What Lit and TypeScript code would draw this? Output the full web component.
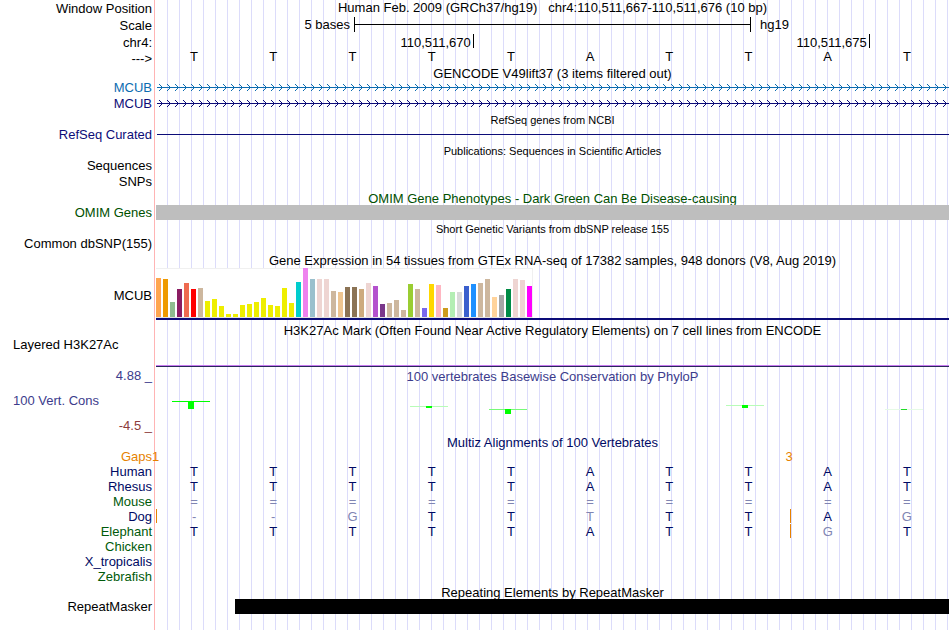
import { LitElement, html, css, nothing } from "lit";
import { customElement, property } from "lit/decorators.js";
import { styleMap } from "lit/directives/style-map.js";

type Tone = "black" | "navy" | "blue" | "omim" | "species" | "cons" | "neg" | "align" | "gap";

/* Median expression bars: [height, colour], one per tissue. */
const Y = "#eeee00";
const TAN = "#cdb79e";
const ROSE = "#eed5d2";
const EXPRESSION: [number, string][] = [
  [39, "#ffa54f"], [38, "#ee9a00"], [15, "#8fbc8f"], [28, "#8b1c62"], [34, "#ee6a50"], [28, "#ff0000"],
  [29, TAN], [16, Y], [18, Y], [11, Y], [3, Y], [3, Y], [12, Y], [13, Y], [15, Y], [19, Y], [12, Y],
  [11, Y], [29, Y], [14, Y], [35, "#00cdcd"], [49, "#ee82ee"], [38, "#9ac0cd"], [38, ROSE], [38, ROSE],
  [26, TAN], [25, "#eec591"], [30, "#8b7355"], [30, "#8b7355"], [28, "#cdaa7d"], [34, ROSE],
  [31, "#b452cd"], [13, "#7a378b"], [14, TAN], [17, TAN], [7, TAN], [33, "#9acd32"], [28, TAN],
  [9, "#7a67ee"], [33, "#ffd700"], [32, "#ffb6c1"], [9, "#cd9b1d"], [25, "#b4eeb4"], [25, "#d9d9d9"],
  [31, "#3a5fcd"], [33, "#1e90ff"], [34, TAN], [38, TAN], [20, "#ffd39b"], [22, "#a6a6a6"],
  [28, "#008b45"], [38, ROSE], [37, ROSE], [31, "#ff00ff"],
];

/* Conservation marks: column, offset from top, block depth, whisker and block colours. */
const MARKS = [
  { col: 1, top: 18, depth: 8, line: "#00ff00", fill: "#00ff00" },
  { col: 4, top: 23, depth: 2, line: "#b8fcb8", fill: "#00ff00" },
  { col: 5, top: 26, depth: 5, line: "#78fa78", fill: "#00ff00" },
  { col: 8, top: 22, depth: 3, line: "#b8fcb8", fill: "#00ff00" },
  { col: 10, top: 26, depth: 1, line: "#e6fae6", fill: "#20dc28" },
];

const REFERENCE = "TTTTTATTAT";

/* Lower case marks a base that differs from the human one. */
const SPECIES: { name: string; tone: Tone; bases: string; inserts: number[] }[] = [
  { name: "Human", tone: "align", bases: REFERENCE, inserts: [] },
  { name: "Rhesus", tone: "align", bases: REFERENCE, inserts: [] },
  { name: "Mouse", tone: "species", bases: "==========", inserts: [] },
  { name: "Dog", tone: "align", bases: "--gTTtTTAg", inserts: [0, 8] },
  { name: "Elephant", tone: "species", bases: "TTTTTATTgT", inserts: [8] },
  { name: "Chicken", tone: "species", bases: "", inserts: [] },
  { name: "X_tropicalis", tone: "align", bases: "", inserts: [] },
  { name: "Zebrafish", tone: "species", bases: "", inserts: [] },
];

const tones = css`
  .black { color: #000000; }
  .navy { color: #0c0c78; }
  .blue { color: #0c6cb0; }
  .omim { color: #005000; }
  .species { color: #005a0a; }
  .cons { color: #3c3c8c; }
  .neg { color: #8c3c3c; }
  .align { color: #000a64; }
  .gap { color: #e68200; }
`;

@customElement("base-row")
class BaseRow extends LitElement {
  @property() bases = "";
  @property() tone: Tone = "black";
  @property({ attribute: false }) inserts: number[] = [];

  static styles = [
    tones,
    css`
      :host { display: block; }
      .row {
        display: grid;
        grid-template-columns: repeat(10, minmax(0, 1fr));
        padding-right: 1px;
      }
      .base { text-align: center; padding-right: 3px; }
      .faint { color: #8085b2; }
      .insert {
        background: linear-gradient(#e68200, #e68200) 0 0 / 1px 14px no-repeat;
      }
    `,
  ];

  render() {
    return html`<div class="row ${this.tone}">
      ${[...this.bases].map((b, i) => {
        const faint = b === "=" || b === "-" || b !== b.toUpperCase();
        const insert = this.inserts.includes(i);
        return html`<span class="base ${faint ? "faint" : ""} ${insert ? "insert" : ""}">${b.toUpperCase()}</span>`;
      })}
    </div>`;
  }
}

@customElement("gene-arrow")
class GeneArrow extends LitElement {
  @property() tone: Tone = "navy";

  static styles = [
    tones,
    css`
      :host { display: block; height: 16px; }
      svg { display: block; width: 100%; height: 16px; }
    `,
  ];

  render() {
    return html`<svg class=${this.tone} shape-rendering="crispEdges" aria-hidden="true">
      <defs>
        <pattern id="chevron" width="8" height="16" patternUnits="userSpaceOnUse">
          <path
            d="M3 4h1v1h-1zM4 5h1v1h-1zM5 6h1v1h-1zM6 7h1v1h-1zM5 8h1v1h-1zM4 9h1v1h-1zM3 10h1v1h-1z"
            fill="currentColor"
          />
        </pattern>
      </defs>
      <rect x="1" y="7" width="100%" height="1" fill="currentColor" />
      <rect width="100%" height="16" fill="url(#chevron)" />
    </svg>`;
  }
}

@customElement("app-root")
class AppRoot extends LitElement {
  static styles = [
    tones,
    css`
      :host {
        display: block;
        font: 13px/15px "Liberation Sans", Arial, sans-serif;
        color: #000000;
        background: #ffffff;
      }
      .browser {
        box-sizing: border-box;
        min-height: 100vh;
        margin-right: 1px;
        background:
          linear-gradient(#ffb4b4, #ffb4b4) 154px 0 / 1px 100% no-repeat,
          linear-gradient(#ffffff, #ffffff) 0 0 / 156px 100% no-repeat,
          repeating-linear-gradient(to right, transparent 0 11px, #dcdcfa 11px 12px) 0 0 / 12px 100% repeat-x;
      }
      .track {
        display: grid;
        grid-template-columns: 152px minmax(0, 1fr);
        column-gap: 4px;
        height: 16px;
      }
      .label { text-align: right; white-space: nowrap; }
      .left { text-align: left; padding-left: 13px; }
      .ruler { height: 17px; line-height: 17px; }
      .sequence { height: 14px; }
      .sequence base-row { line-height: 11px; }
      .title {
        height: 15px;
        margin: 0 0 0 156px;
        font-size: 13px;
        font-weight: normal;
        line-height: 17px;
        text-align: center;
        white-space: nowrap;
      }
      .small { font-size: 11px; line-height: 16px; }
      .position { text-align: center; white-space: pre; line-height: 16px; }

      .scale { display: grid; grid-template-columns: 1fr 2fr 1fr; padding-right: 1px; line-height: 16px; }
      .unit { text-align: right; padding-right: 4px; }
      .bar {
        height: 15px;
        margin-right: -1px;
        border: solid #000000;
        border-width: 0 1px;
        background: linear-gradient(#000000, #000000) 0 7px / 100% 1px no-repeat;
      }
      .assembly { padding-left: 10px; }

      .ticks { display: grid; grid-template-columns: 4fr 5fr 1fr; padding-right: 1px; }
      .tick {
        height: 14px;
        margin-right: -1px;
        padding-right: 2px;
        border-right: 1px solid #000000;
        text-align: right;
      }

      .hairline { height: 1px; margin: 7px 0 0 1px; background: #0c0c78; }
      .region { height: 15px; background: #bebebe; }

      .gtex { height: 55px; }
      .gtex .label { padding-top: 21px; }
      .expression { padding-top: 1px; }
      .chart {
        display: flex;
        align-items: flex-end;
        gap: 2px;
        box-sizing: border-box;
        width: fit-content;
        height: 50px;
        padding: 0 1px 1px 0;
        background: #ffffff;
        box-shadow: inset -1px 1px #f0f0f0, inset 0 -1px #e0e0e0;
      }
      .tissue { width: 5px; }
      .gene { height: 2px; background: #0c0c78; }

      .histone { height: 31px; }
      .signal { margin-top: 28px; height: 1px; border-top: 1px solid #c87af0; background: #28285a; }

      .conservation { height: 66px; }
      .levels { display: flex; flex-direction: column; gap: 10px; }
      .panel .title { margin-left: 0; }
      .marks {
        display: grid;
        grid-template-columns: repeat(10, minmax(0, 1fr));
        grid-template-rows: 1fr;
        align-items: start;
        padding-left: 16px;
        margin-right: -15px;
        overflow: hidden;
      }
      .mark { grid-row: 1; width: 38px; height: 8px; background-repeat: no-repeat; background-size: 100% 1px; }
      .block { width: 6px; margin: 0 auto; }

      .species-row { height: 15px; }
      .gaps { display: grid; grid-template-columns: 8fr 2fr; padding-right: 1px; }
      .count { margin-left: -4px; }
      .repeat { height: 15px; margin-left: 10%; background: #000000; }
    `,
  ];

  private heading(text: string, tone: Tone = "black", small = false) {
    return html`<h2 class="title ${tone} ${small ? "small" : ""}">${text}</h2>`;
  }

  private track(label: string, tone: Tone = "black", body: unknown = nothing) {
    return html`<div class="track">
      <div class="label ${tone}">${label}</div>
      <div>${body}</div>
    </div>`;
  }

  render() {
    return html`<main class="browser">
      <div class="track ruler">
        <div class="label">Window Position</div>
        <div class="position">Human Feb. 2009 (GRCh37/hg19)   chr4:110,511,667-110,511,676 (10 bp)</div>
      </div>
      <div class="track ruler">
        <div class="label">Scale</div>
        <div class="scale">
          <span class="unit">5 bases</span><span class="bar"></span><span class="assembly">hg19</span>
        </div>
      </div>
      <div class="track ruler">
        <div class="label">chr4:</div>
        <div class="ticks"><span class="tick">110,511,670</span><span class="tick">110,511,675</span></div>
      </div>
      <div class="track sequence">
        <div class="label">---&gt;</div>
        <base-row bases=${REFERENCE}></base-row>
      </div>

      ${this.heading("GENCODE V49lift37 (3 items filtered out)")}
      ${this.track("MCUB", "blue", html`<gene-arrow tone="blue"></gene-arrow>`)}
      ${this.track("MCUB", "navy", html`<gene-arrow tone="navy"></gene-arrow>`)}
      ${this.heading("RefSeq genes from NCBI", "black", true)}
      ${this.track("RefSeq Curated", "navy", html`<div class="hairline"></div>`)}
      ${this.heading("Publications: Sequences in Scientific Articles", "black", true)}
      ${this.track("Sequences")} ${this.track("SNPs")}
      ${this.heading("OMIM Gene Phenotypes - Dark Green Can Be Disease-causing", "omim")}
      ${this.track("OMIM Genes", "omim", html`<div class="region"></div>`)}
      ${this.heading("Short Genetic Variants from dbSNP release 155", "black", true)}
      ${this.track("Common dbSNP(155)")}

      ${this.heading("Gene Expression in 54 tissues from GTEx RNA-seq of 17382 samples, 948 donors (V8, Aug 2019)")}
      <div class="track gtex">
        <div class="label">MCUB</div>
        <div class="expression">
          <div class="chart">
            ${EXPRESSION.map(
              ([h, c]) => html`<div class="tissue" style=${styleMap({ height: `${h}px`, background: c })}></div>`,
            )}
          </div>
          <div class="gene"></div>
        </div>
      </div>

      ${this.heading("H3K27Ac Mark (Often Found Near Active Regulatory Elements) on 7 cell lines from ENCODE")}
      <div class="track histone">
        <div class="label left">Layered H3K27Ac</div>
        <div><div class="signal"></div></div>
      </div>

      <div class="track conservation">
        <div class="levels">
          <div class="label cons">4.88 _</div>
          <div class="label left cons">100 Vert. Cons</div>
          <div class="label neg">-4.5 _</div>
        </div>
        <div class="panel">
          ${this.heading("100 vertebrates Basewise Conservation by PhyloP", "cons")}
          <div class="marks">
            ${MARKS.map(
              (m) => html`<div
                class="mark"
                style=${styleMap({
                  gridColumn: `${m.col}`,
                  marginTop: `${m.top}px`,
                  backgroundImage: `linear-gradient(${m.line}, ${m.line})`,
                })}
              >
                <div class="block" style=${styleMap({ height: `${m.depth}px`, background: m.fill })}></div>
              </div>`,
            )}
          </div>
        </div>
      </div>

      ${this.heading("Multiz Alignments of 100 Vertebrates", "align")}
      <div class="track species-row">
        <div class="label gap">Gaps</div>
        <div class="gaps gap"><span class="count">1</span><span class="count">3</span></div>
      </div>
      ${SPECIES.map(
        (s) => html`<div class="track species-row">
          <div class="label ${s.tone}">${s.name}</div>
          <base-row tone="align" .bases=${s.bases} .inserts=${s.inserts}></base-row>
        </div>`,
      )}

      ${this.heading("Repeating Elements by RepeatMasker")}
      ${this.track("RepeatMasker", "black", html`<div class="repeat"></div>`)}
    </main>`;
  }
}
